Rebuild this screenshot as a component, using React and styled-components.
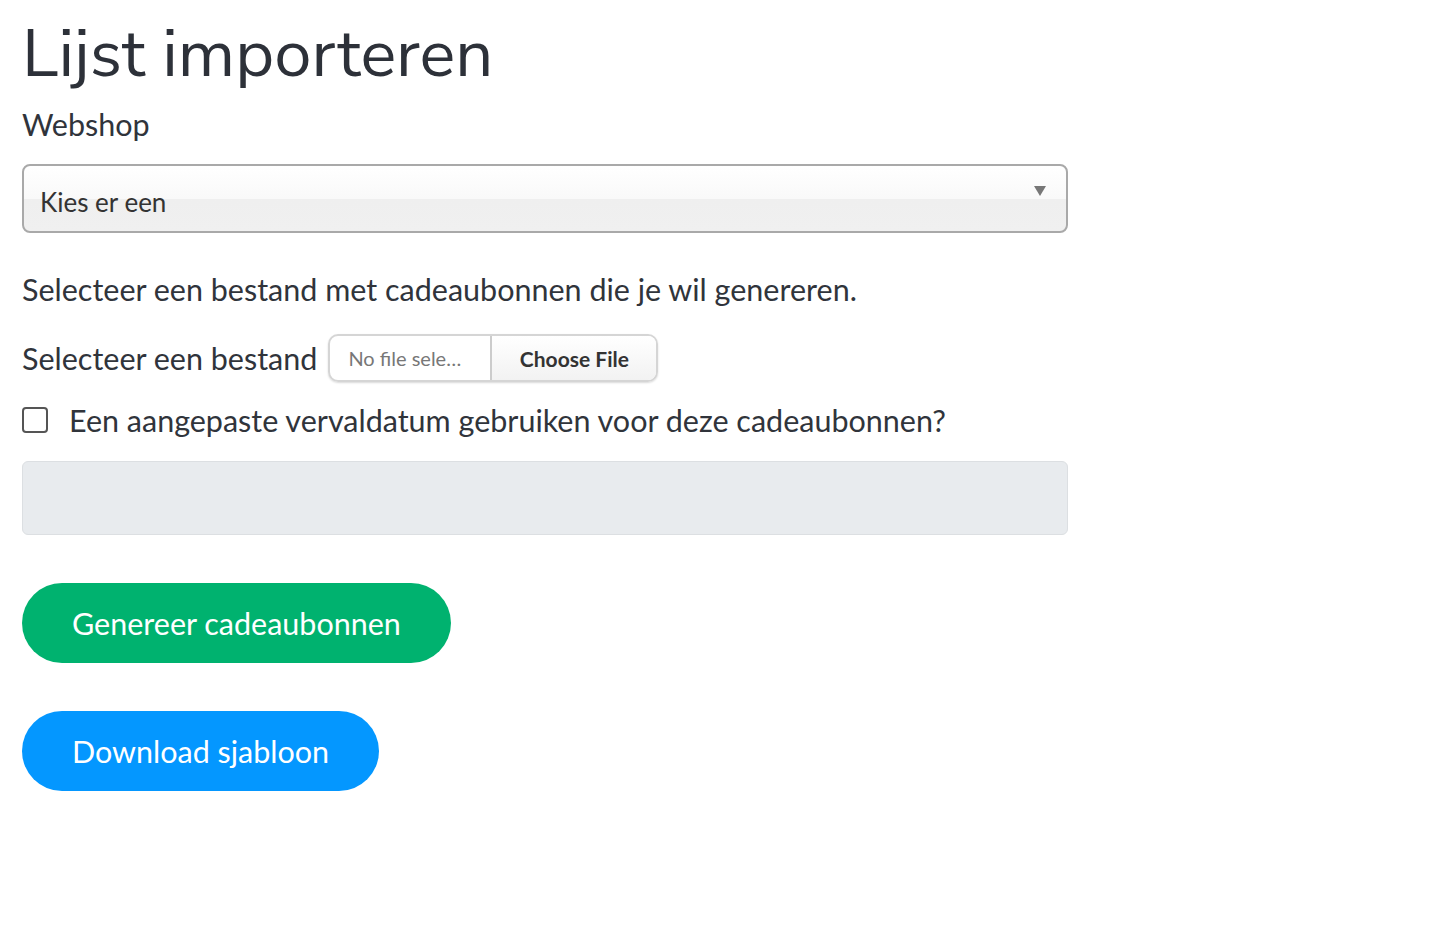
import React from 'react';
import styled, { createGlobalStyle } from 'styled-components';

const GlobalStyle = createGlobalStyle`
  body {
    margin: 0;
    background: #fff;
    font-family: "Source Sans Pro", Lato, "Noto Sans", sans-serif;
    color: #30343b;
  }
`;

const Page = styled.div`
  padding: 14px 22px 0 22px;
  width: 1046px;
  display: flex;
  flex-direction: column;
`;

const Title = styled.h1`
  margin: 0;
  font-family: "Nunito Sans", "Open Sans", Lato, sans-serif;
  font-weight: 400;
  font-size: 67px;
  line-height: 80px;
  color: #2d3139;
`;

const Label = styled.label`
  font-size: 30.5px;
  line-height: 40px;
  margin-top: ${p => p.$top ?? 10}px;
`;

const SelectBox = styled.div`
  margin-top: 20px;
  height: 69px;
  border: 2px solid #a9a9a9;
  border-radius: 8px;
  background: linear-gradient(to bottom, #ffffff 0%, #f9f9f9 50%, #efefef 51%, #f0f0f0 100%);
  display: flex;
  align-items: center;
  justify-content: space-between;
  padding: 6px 20px 0 16px;
  font-size: 26px;
  color: #333;
  box-sizing: border-box;
`;

const Arrow = styled.span`
  width: 0;
  height: 0;
  border-left: 6px solid transparent;
  border-right: 6px solid transparent;
  border-top: 10px solid #777;
  align-self: flex-start;
  margin-top: 14px;
`;

const Text = styled.p`
  margin: 36px 0 0 0;
  font-size: 30.5px;
  line-height: 40px;
`;

const FileRow = styled.div`
  margin-top: 25px;
  display: flex;
  align-items: center;
  gap: 11px;
`;

const FileInput = styled.div`
  display: flex;
  height: 44px;
  border: 2px solid #d5d5d5;
  border-radius: 10px;
  overflow: hidden;
  box-shadow: 0 1px 2px rgba(0,0,0,0.15);
`;

const FileName = styled.span`
  width: 142px;
  padding-left: 18px;
  display: flex;
  align-items: center;
  font-size: 20px;
  color: #777;
  border-right: 2px solid #ccc;
`;

const FileButton = styled.span`
  width: 164px;
  display: flex;
  align-items: center;
  justify-content: center;
  font-size: 21px;
  font-weight: 700;
  color: #333;
  background: linear-gradient(to bottom, #fff, #f2f2f2);
`;

const CheckRow = styled.label`
  margin-top: 18px;
  display: flex;
  align-items: center;
  gap: 21px;
  font-size: 30.5px;
  line-height: 40px;
`;

const Box = styled.span`
  width: 22px;
  height: 22px;
  border: 2px solid #555;
  border-radius: 4px;
  flex-shrink: 0;
`;

const DisabledInput = styled.div`
  margin-top: 21px;
  height: 74px;
  background: #e8ebee;
  border: 1px solid #dcdfe2;
  border-radius: 6px;
  box-sizing: border-box;
`;

const Button = styled.button`
  align-self: flex-start;
  margin-top: ${p => p.$top}px;
  height: 80px;
  padding: 0 50px;
  border: none;
  border-radius: 40px;
  background: ${p => p.$bg};
  color: #fff;
  font-family: inherit;
  font-size: 30.5px;
`;

export default function App() {
  return (
    <>
      <GlobalStyle />
      <Page>
        <Title>Lijst importeren</Title>
        <Label>Webshop</Label>
        <SelectBox>
          <span>Kies er een</span>
          <Arrow />
        </SelectBox>
        <Text>Selecteer een bestand met cadeaubonnen die je wil genereren.</Text>
        <FileRow>
          <Label $top={0}>Selecteer een bestand</Label>
          <FileInput>
            <FileName>No file sele…</FileName>
            <FileButton>Choose File</FileButton>
          </FileInput>
        </FileRow>
        <CheckRow>
          <Box />
          Een aangepaste vervaldatum gebruiken voor deze cadeaubonnen?
        </CheckRow>
        <DisabledInput />
        <Button $top={48} $bg="#00b26f">Genereer cadeaubonnen</Button>
        <Button $top={48} $bg="#0497ff">Download sjabloon</Button>
      </Page>
    </>
  );
}
